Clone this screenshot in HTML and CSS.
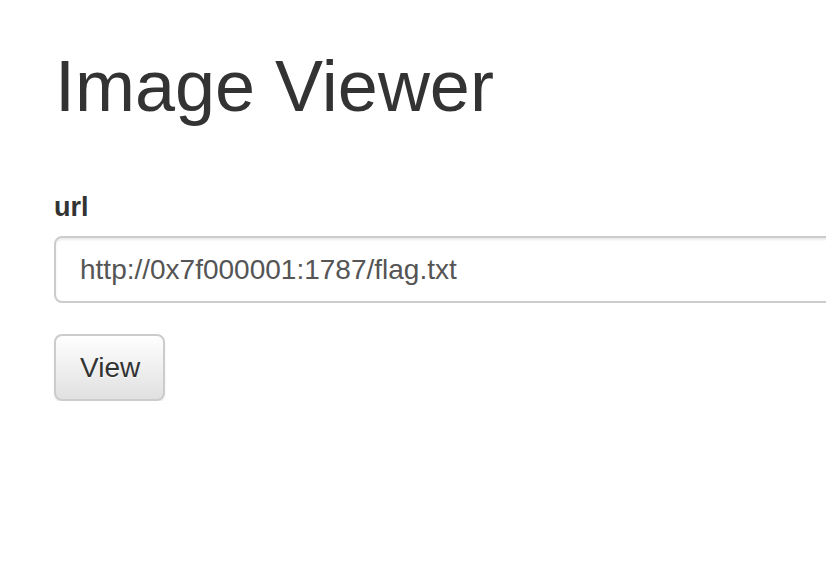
FILE: index.html
```html
<!DOCTYPE html>
<html lang="en">
<head>
<meta charset="utf-8">
<title>Image Viewer</title>
<link rel="stylesheet" href="styles.css">
</head>
<body>
<div class="container">
  <h1 class="title">Image Viewer</h1>
  <form class="viewer-form">
    <div class="form-group">
      <label class="field-label" for="url">url</label>
      <input class="field-input" id="url" type="text" value="http://0x7f000001:1787/flag.txt">
    </div>
    <button class="btn" type="button">View</button>
  </form>
</div>
</body>
</html>
```
FILE: styles.css
```css
html, body {
  margin: 0;
  padding: 0;
  background: #fff;
  overflow: hidden;
}
body {
  font-family: "Liberation Sans", Arial, Helvetica, sans-serif;
  color: #333;
}
.container {
  padding: 46px 0 0 54px;
  overflow: hidden;
}
.title {
  margin: 0;
  font-size: 72px;
  line-height: 80px;
  font-weight: 400;
  color: #333;
  padding-left: 1px;
}
.viewer-form {
  margin-top: 62px;
}
.form-group {
  display: flex;
  flex-direction: column;
  align-items: flex-start;
  overflow: hidden;
}
.field-label {
  font-size: 27px;
  line-height: 38px;
  font-weight: 700;
  color: #333;
  margin-bottom: 10px;
}
.field-input {
  box-sizing: border-box;
  width: calc(100% + 16px);
  height: 67px;
  padding: 0 24px;
  border: 2px solid #ccc;
  border-radius: 8px;
  font-family: "Liberation Sans", Arial, Helvetica, sans-serif;
  font-size: 28px;
  color: #555;
  background: #fff;
  box-shadow: inset 0 2px 2px rgba(0,0,0,.075);
  outline: none;
}
.btn {
  box-sizing: border-box;
  margin-top: 31px;
  height: 67px;
  width: 111px;
  padding: 0 24px;
  border: 2px solid #ccc;
  border-radius: 8px;
  font-family: "Liberation Sans", Arial, Helvetica, sans-serif;
  font-size: 28px;
  color: #333;
  text-shadow: 0 1px 0 #fff;
  background: linear-gradient(to bottom, #fff 0, #e0e0e0 100%);
  box-shadow: inset 0 2px 0 rgba(255,255,255,.15), 0 2px 2px rgba(0,0,0,.075);
  cursor: pointer;
}
```
